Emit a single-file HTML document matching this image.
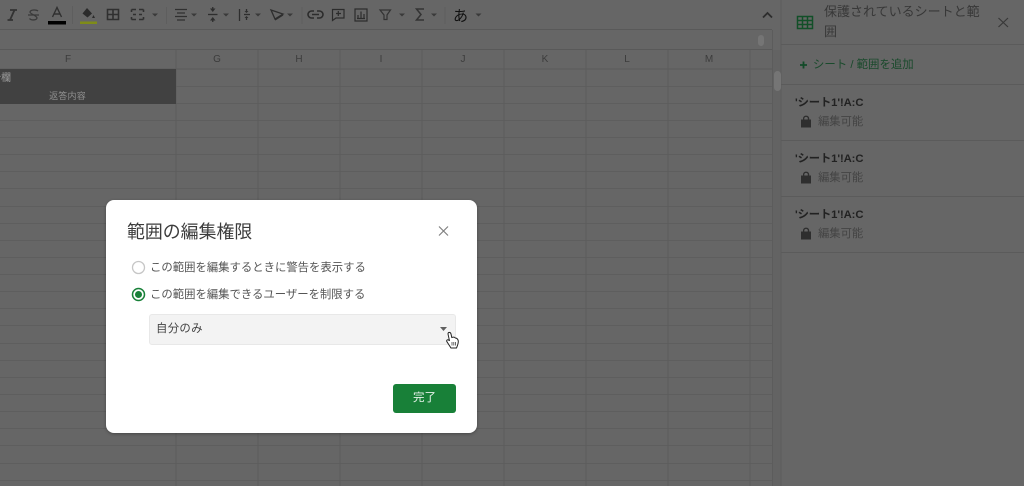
<!DOCTYPE html>
<html lang="ja"><head><meta charset="utf-8"><title>範囲の編集権限</title>
<style>
html,body{margin:0;padding:0}
body{width:1024px;height:486px;overflow:hidden;background:#666;position:relative;font-family:"Liberation Sans","Noto Sans CJK JP",sans-serif;color:#333}
div{box-sizing:border-box}
.a{position:absolute;white-space:nowrap}
.col{position:absolute;top:50px;height:19px;line-height:19px;text-align:center;font-size:10px;color:#3c3c3c;width:82px}
.item{font-size:11.3px;color:#222;left:795px;line-height:16px;font-weight:bold;letter-spacing:-.1px}
.perm{font-size:11.3px;color:#444;left:818px;line-height:16px}
.lbl{left:150px;font-size:11.37px;line-height:16px;color:#555}
svg{position:absolute;left:0;top:0}
</style></head><body>
<svg width="1024" height="486" viewBox="0 0 1024 486">
<path d="M0 29.5H772M0 49.5H772M0 69H772" stroke="#595959" stroke-width="1" fill="none"/>
<path d="M0 86.5H772M0 103.5H772M0 120.5H772M0 137.5H772M0 154.5H772M0 171.5H772M0 188.5H772M0 206.5H772M0 223.5H772M0 240.5H772M0 257.5H772M0 274.5H772M0 291.5H772M0 308.5H772M0 325.5H772M0 343.5H772M0 360.5H772M0 377.5H772M0 394.5H772M0 411.5H772M0 428.5H772M0 445.5H772M0 463.5H772M0 480.5H772" stroke="#5e5e5e" stroke-width="1" fill="none"/>
<path d="M176 50V486M258 50V486M340 50V486M422 50V486M504 50V486M586 50V486M668 50V486M750 50V486" stroke="#5c5c5c" stroke-width="1" fill="none"/>
<rect x="772" y="50" width="9" height="436" fill="#636363"/>
<path d="M772.5 30V486M781 0V486" stroke="#5c5c5c" stroke-width="1" fill="none"/>
<rect x="0" y="69" width="176" height="35" fill="#414141"/>
<rect x="758" y="35" width="6" height="11" rx="3" fill="#757575"/>
<rect x="774" y="71" width="7" height="20" rx="3.5" fill="#757575"/>
<path d="M781 44.5H1024M781 84.5H1024M781 140.5H1024M781 196.5H1024M781 252.5H1024" stroke="#5b5b5b" stroke-width="1" fill="none"/>

<!-- toolbar -->
<g fill="none" stroke="#333" stroke-width="1.6">
<path d="M10 20L14.500 10M10 10H17M7.500 20H13" stroke="#333" stroke-width="1.800"/>
<path d="M38 11C36.500 9.500 30.500 9.500 30 12C29.800 14 37 15.500 37 18C36.500 20.500 31 20.500 29.500 18.500M28 15H39" stroke="#3a3a3a" stroke-width="1.300"/>
<path d="M52.500 17L57 7.500L61.500 17M54 14H60" stroke="#303030" stroke-width="1.400"/>
<path d="M107.500 9.500H118.500V19.500H107.500ZM113 9.500V19.500M107.500 14.500H118.500" stroke="#303030"/>
<path d="M131.500 9.500H136M139 9.500H143.500M131.500 19.500H136M139 19.500H143.500M131.500 9.500V12M143.500 9.500V12M131.500 17V19.500M143.500 17V19.500M133 14.500H136M139 14.500H142" stroke="#303030"/>
<path d="M175 9.500H187M177 13H185M175 16.500H187M177 20H185" stroke="#303030" stroke-width="1.200"/>
<path d="M208 14.500H217.500" stroke="#2e2e2e" stroke-width="1.300"/>
<path d="M212.750 7V11" stroke="#2e2e2e" stroke-width="1.300"/>
<path d="M212.750 18V22" stroke="#2e2e2e" stroke-width="1.300"/>
<path d="M239.500 9V21M244 14.500H250M246.500 9V11.500M246.500 17V20" stroke="#2e2e2e" stroke-width="1.300"/>
<path d="M271 10L283 14L275 19ZM275 20L283 15" stroke="#2e2e2e" stroke-width="1.300"/>
<path d="M314 11H311.500a3.500 3.500 0 0 0 0 7H314M317 11H319.500a3.500 3.500 0 0 1 0 7H317M312 14.500H319" stroke="#2c2c2c"/>
<path d="M332.500 9.500H344V18H336L332.500 20.500ZM338.300 11V16M336 13.500H341" stroke="#2c2c2c" stroke-width="1.200"/>
<path d="M355 9H367V21H355ZM358 18V15M361 18V11.500M364 18V14M357 18.500H365" stroke="#2c2c2c" stroke-width="1.200"/>
<path d="M380 10H390.500L387 15V19.500H384V15Z" stroke="#333" stroke-width="1.200"/>
<path d="M424 9H416.500L421 14.500L416.500 20H424" stroke="#333" stroke-width="1.500"/>
<path d="M763 17.500L767.500 13L772 17.500" stroke="#2c2c2c" stroke-width="1.800"/>
<path d="M998.500 18L1008 27M1008 18L998.500 27" stroke="#383838" stroke-width="1.200"/>
</g>
<path d="M210 8.500H215.500L212.750 12ZM210 20.500H215.500L212.750 17Z" fill="#2e2e2e"/>
<path d="M244.500 11H248.500L246.500 13ZM244.500 18H248.500L246.500 16Z" fill="#2e2e2e"/>
<rect x="48" y="21" width="18" height="3.500" fill="#000"/>
<rect x="80" y="21.500" width="17" height="2.500" fill="#7f8c18"/>
<path d="M87 8L92 13.500L87.500 17.500L82.500 13.500ZM93.500 15L95 18H92Z" fill="#2b2b2b"/>
<path d="M72.500 6V24M166.500 7V24M302 7V24M445 7V24" stroke="#5e5e5e" stroke-width="1"/>
<g fill="#3a3a3a">
<path d="M152 13.500H158L155 16.500ZM191 13.500H197L194 16.500ZM223 13.500H229L226 16.500ZM255 13.500H261L258 16.500ZM287 13.500H293L290 16.500ZM399 13.500H405L402 16.500ZM431 13.500H437L434 16.500ZM475.500 13.500H481.500L478.500 16.500Z"/>
</g>

<!-- sheet icon -->
<g fill="none" stroke="#124f28" stroke-width="1.500">
<rect x="797.500" y="16.500" width="15" height="12"/>
<path d="M797.500 20.500H812.500M797.500 24.500H812.500M802.500 16.500V28.500M807.500 16.500V28.500"/>
</g>
<path d="M800 65H807M803.500 61.500V68.500" stroke="#124a28" stroke-width="1.800"/>
<g fill="#2e2e2e">
<path d="M801 119.500H811V127.500H801ZM803 119.500V118a3.200 3.200 0 0 1 6.200 0V119.500H807.800V118a1.900 1.900 0 0 0-3.500 0V119.500Z"/>
<path d="M801 175.500H811V183.500H801ZM803 175.500V174a3.200 3.200 0 0 1 6.200 0V175.500H807.800V174a1.900 1.900 0 0 0-3.500 0V175.500Z"/>
<path d="M801 231.500H811V239.500H801ZM803 231.500V230a3.200 3.200 0 0 1 6.200 0V231.500H807.800V230a1.900 1.900 0 0 0-3.500 0V231.500Z"/>
</g>
</svg>

<div class="col" style="left:27px;width:82px">F</div>
<div class="col" style="left:176px">G</div>
<div class="col" style="left:258px">H</div>
<div class="col" style="left:340px">I</div>
<div class="col" style="left:422px">J</div>
<div class="col" style="left:504px">K</div>
<div class="col" style="left:586px">L</div>
<div class="col" style="left:668px">M</div>

<div class="a" style="left:-9px;top:72px;font-size:10px;line-height:14px;color:#9a9a9a">分欄</div>
<div class="a" style="left:0;width:135px;text-align:center;top:89px;font-size:9px;line-height:14px;color:#8f8f8f;letter-spacing:.2px">返答内容</div>

<div class="a" style="left:453px;top:6px;font-size:15px;line-height:22px;color:#111">あ</div>

<div class="a" style="left:824px;top:2px;width:165px;white-space:normal;font-size:13px;line-height:20px;color:#383838">保護されているシートと範囲</div>
<div class="a" style="left:813px;top:57px;font-size:11.4px;line-height:16px;color:#1a4a2c">シート / 範囲を追加</div>

<div class="a item" style="top:95px">'シート1'!A:C</div>
<div class="a perm" style="top:114px">編集可能</div>
<div class="a item" style="top:151px">'シート1'!A:C</div>
<div class="a perm" style="top:170px">編集可能</div>
<div class="a item" style="top:207px">'シート1'!A:C</div>
<div class="a perm" style="top:226px">編集可能</div>

<!-- dialog -->
<div class="a" style="left:106px;top:200px;width:371px;height:233px;background:#fff;border-radius:8px;box-shadow:0 1px 3px rgba(0,0,0,.3)"></div>
<div class="a" style="left:127px;top:219.500px;font-size:17.900px;line-height:24px;color:#3c3c3c">範囲の編集権限</div>
<div class="a lbl" style="top:260px">この範囲を編集するときに警告を表示する</div>
<div class="a lbl" style="top:287px">この範囲を編集できるユーザーを制限する</div>
<div class="a" style="left:149px;top:314px;width:307px;height:31px;background:#f3f3f3;border:1px solid #e8e8e8;border-radius:3px"></div>
<div class="a" style="left:156px;top:321px;font-size:11.4px;line-height:17px;color:#444;letter-spacing:.3px">自分のみ</div>
<div class="a" style="left:393px;top:384px;width:63px;height:29px;background:#188038;border-radius:3px;color:#e6f2ea;font-size:11.500px;line-height:28px;text-align:center">完了</div>
<svg width="1024" height="486" viewBox="0 0 1024 486">
<path d="M439 226.500L448 235.500M448 226.500L439 235.500" stroke="#808080" stroke-width="1.200" fill="none"/>
<circle cx="138.500" cy="267.500" r="6" fill="none" stroke="#c6c6c6" stroke-width="1.300"/>
<circle cx="138.500" cy="294.500" r="6" fill="none" stroke="#188038" stroke-width="1.500"/>
<circle cx="138.500" cy="294.500" r="3.500" fill="#188038"/>
<path d="M440 327H447L443.500 331Z" fill="#606060"/>
<path d="M448 334C448 331.800 450.500 331.800 451 334L451.800 337.500C453.300 337 454.800 337.300 455.300 338C457 338 458.300 339.500 458.300 341.500C458.300 343.800 457.500 345.500 456.500 348H451L446.800 341.500C446.300 339.800 448 339 449.500 340.800Z" fill="#fff" stroke="#222" stroke-width="1"/>
<path d="M452 342V345.500M453.800 342V345.500M455.600 342V345.500" stroke="#444" stroke-width=".8"/>
</svg>
</body></html>
